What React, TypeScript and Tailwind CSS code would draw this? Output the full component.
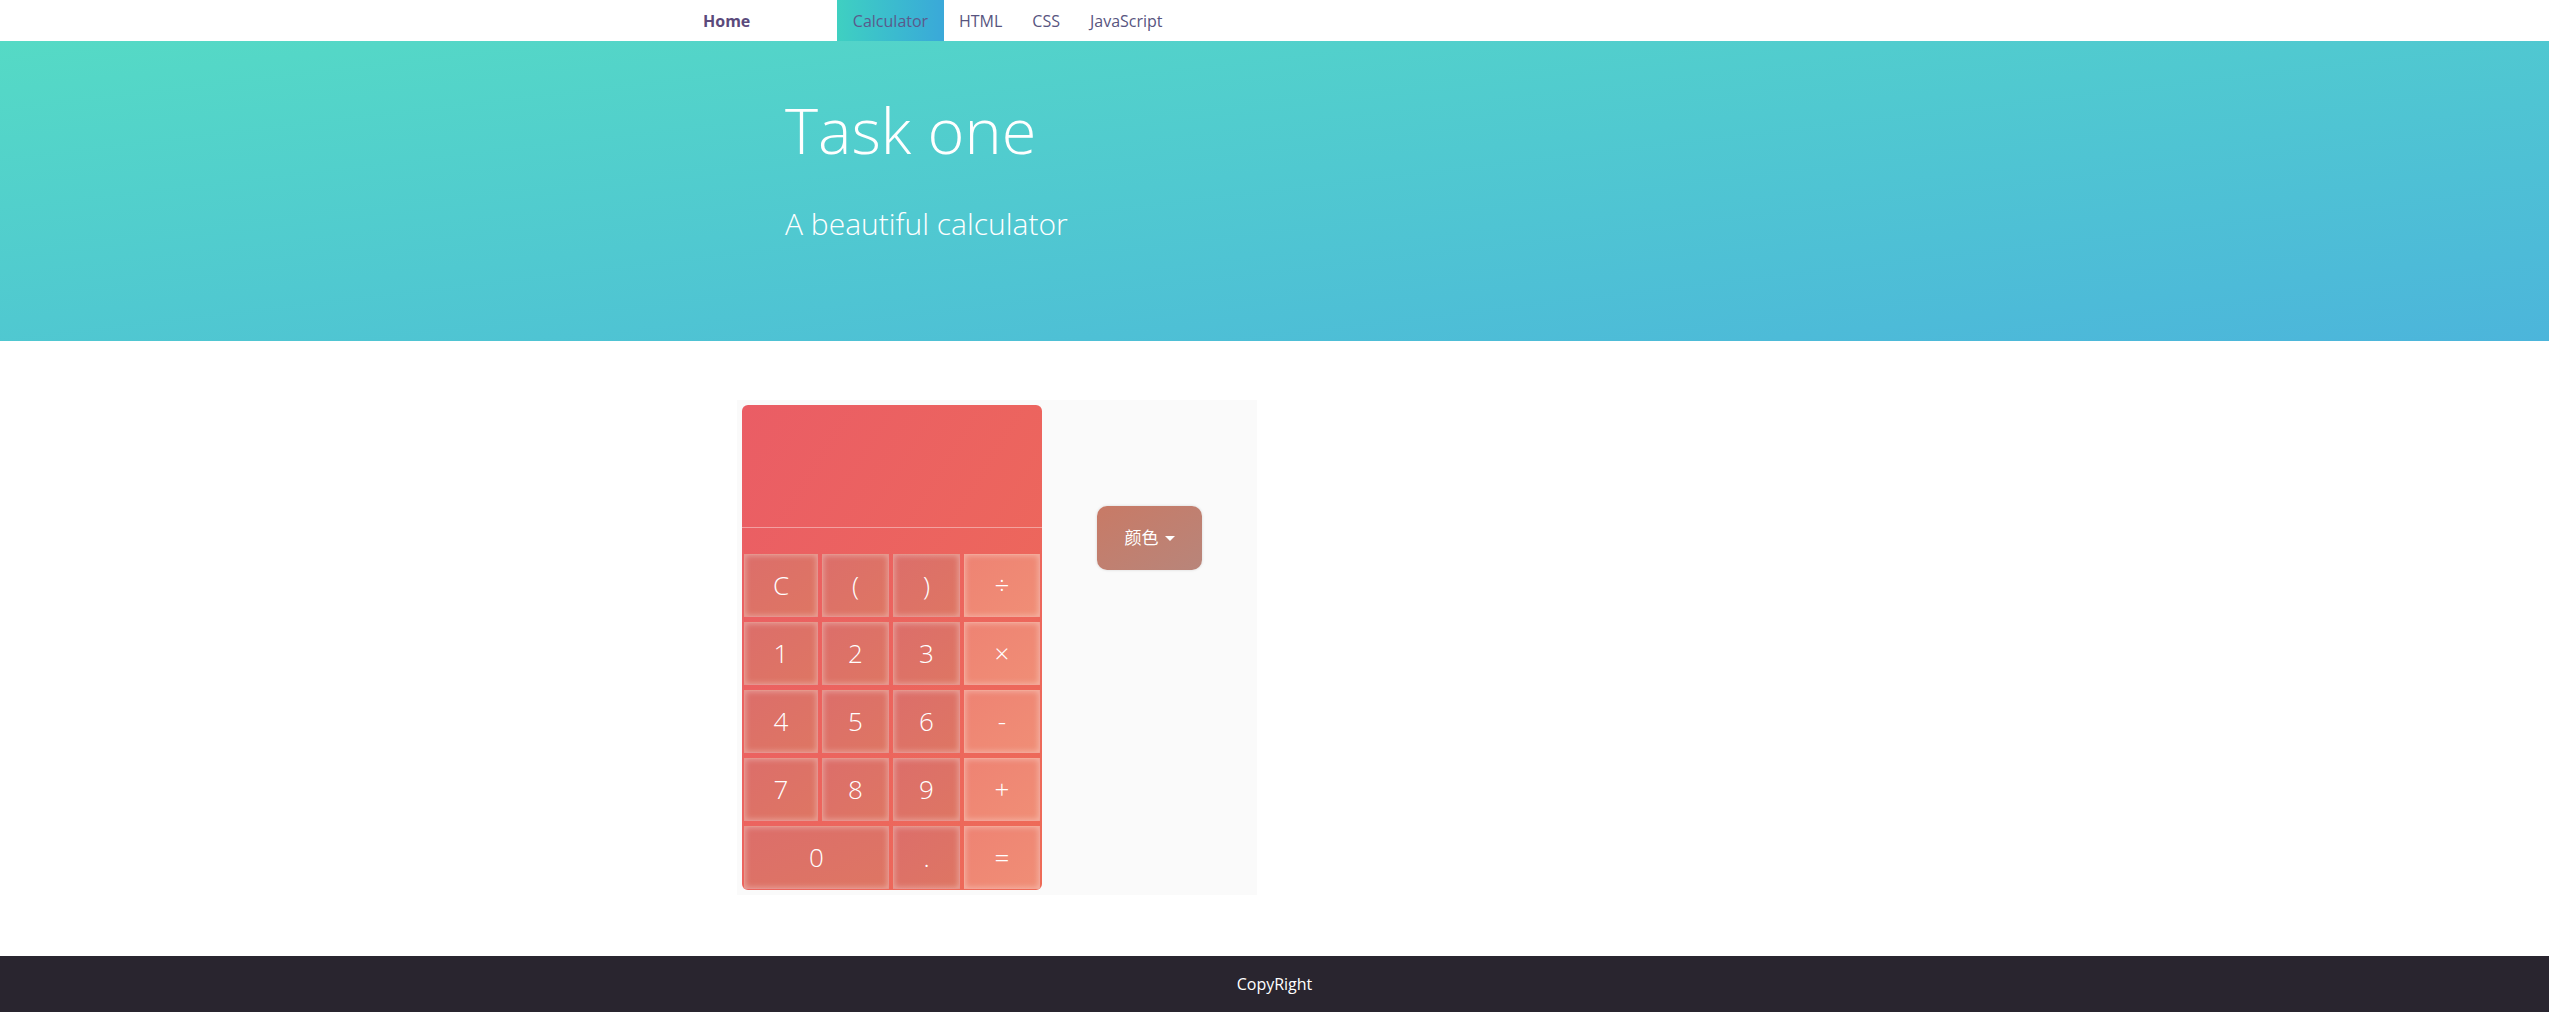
import React from "react";

const rows: { label: string; op?: boolean; span?: boolean }[][] = [
  [{ label: "C" }, { label: "(" }, { label: ")" }, { label: "÷", op: true }],
  [{ label: "1" }, { label: "2" }, { label: "3" }, { label: "×", op: true }],
  [{ label: "4" }, { label: "5" }, { label: "6" }, { label: "-", op: true }],
  [{ label: "7" }, { label: "8" }, { label: "9" }, { label: "+", op: true }],
  [{ label: "0", span: true }, { label: "." }, { label: "=", op: true }],
];

function Key({ label, op, span }: { label: string; op?: boolean; span?: boolean }) {
  return (
    <div
      className={
        "flex items-center justify-center text-white text-[26px] font-light border border-white/25 shadow-[inset_0_0_6px_rgba(255,255,255,0.4)] " +
        (span ? "col-span-2 " : "") +
        (op
          ? "bg-gradient-to-br from-[#ee8373] to-[#f08e76]"
          : "bg-gradient-to-br from-[#dc6e6a] to-[#de7663]")
      }
    >
      {label}
    </div>
  );
}

export default function App() {
  return (
    <div className="min-h-screen flex flex-col bg-white font-['Open_Sans','Noto_Sans_CJK_SC',sans-serif]">
      <nav className="h-[41px] shrink-0 flex items-stretch bg-white pl-[703px] text-[16px]">
        <div className="w-[134px] flex items-center font-bold text-[#5b4a7c]">Home</div>
        <div className="flex items-center px-[15px] w-[107px] justify-center bg-gradient-to-r from-[#3fd0c1] to-[#3aa8d9] text-[#5a5a8c]">
          Calculator
        </div>
        <div className="flex items-center px-[15px] text-[#58557f]">HTML</div>
        <div className="flex items-center px-[15px] text-[#58557f]">CSS</div>
        <div className="flex items-center px-[15px] text-[#58557f]">JavaScript</div>
      </nav>

      <header className="h-[300px] shrink-0 bg-gradient-to-br from-[#55dac5] to-[#4cb5db] pl-[785px] pt-[51px] text-white">
        <h1 className="text-[63px] font-light leading-[1.2]">Task one</h1>
        <p className="text-[30px] font-light mt-[38px] leading-[1.2]">A beautiful calculator</p>
      </header>

      <main className="flex-1 pt-[59px]">
        <div className="ml-[737px] w-[520px] h-[495px] bg-[#fafafa] p-[5px] flex">
          <div className="w-[300px] h-[485px] rounded-[6px] bg-gradient-to-br from-[#ea5d65] to-[#ee6b57] flex flex-col overflow-hidden">
            <div className="h-[122px]" />
            <div className="h-[25px] border-t border-white/40" />
            <div className="flex-1 px-[2px] pt-[2px] grid grid-cols-[74px_67px_67px_76px] grid-rows-[repeat(5,63px)] gap-x-[4px] gap-y-[5px]">
              {rows.flat().map((k, i) => (
                <Key key={i} {...k} />
              ))}
            </div>
          </div>
          <div className="ml-[55px] mt-[101px]">
            <button className="w-[105px] h-[64px] rounded-[10px] bg-gradient-to-br from-[#c87a66] to-[#b8857a] shadow-[0_0_3px_rgba(0,0,0,0.15)] text-white text-[17px] flex items-center justify-center gap-[6px]">
              <span>颜色</span>
              <span className="w-0 h-0 border-l-[5px] border-r-[5px] border-t-[5px] border-l-transparent border-r-transparent border-t-white" />
            </button>
          </div>
        </div>
      </main>

      <footer className="h-[56px] shrink-0 bg-[#29252f] flex items-center justify-center text-white text-[16px]">
        CopyRight
      </footer>
    </div>
  );
}
